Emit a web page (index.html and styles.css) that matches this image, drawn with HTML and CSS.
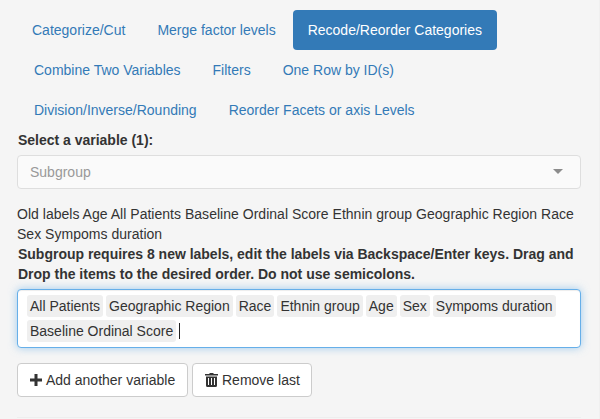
FILE: index.html
```html
<!DOCTYPE html>
<html lang="en">
<head>
<meta charset="utf-8">
<title>Recode/Reorder Categories</title>
<link rel="stylesheet" href="styles.css">
</head>
<body>
<main class="panel">
  <nav class="pills">
    <div class="pill-row first">
      <a class="pill">Categorize/Cut</a>
      <a class="pill">Merge factor levels</a>
      <a class="pill active">Recode/Reorder Categories</a>
    </div>
    <div class="pill-row">
      <a class="pill">Combine Two Variables</a>
      <a class="pill">Filters</a>
      <a class="pill">One Row by ID(s)</a>
    </div>
    <div class="pill-row">
      <a class="pill">Division/Inverse/Rounding</a>
      <a class="pill">Reorder Facets or axis Levels</a>
    </div>
  </nav>
  <div class="label">Select a variable (1):</div>
  <div class="select"><span>Subgroup</span><i class="caret"></i></div>
  <div class="old-labels">Old labels Age All Patients Baseline Ordinal Score Ethnin group Geographic Region Race<br>Sex Sympoms duration</div>
  <div class="label">Subgroup requires 8 new labels, edit the labels via Backspace/Enter keys. Drag and<br>Drop the items to the desired order. Do not use semicolons.</div>
  <div class="tags">
    <span class="tag">All Patients</span>
    <span class="tag">Geographic Region</span>
    <span class="tag">Race</span>
    <span class="tag">Ethnin group</span>
    <span class="tag">Age</span>
    <span class="tag">Sex</span>
    <span class="tag">Sympoms duration</span>
    <span class="tag">Baseline Ordinal Score</span>
    <i class="cursor"></i>
  </div>
  <div class="buttons">
    <button class="btn add"><svg width="12" height="12" viewBox="0 0 12 12"><path d="M4.500 0h3v4.500H12v3H7.500V12h-3V7.500H0v-3h4.500z"/></svg>Add another variable</button>
    <button class="btn remove"><svg width="13" height="14" viewBox="0 0 13 14"><path d="M0 1h4.500V0h4v1H13v1.500H0zM1 3.500h11V12.500q0 1.500-1.500 1.500h-8Q1 14 1 12.500z"/><path class="slots" d="M3.500 5v7M6.500 5v7M9.500 5v7"/></svg>Remove last</button>
  </div>
  <hr>
</main>
</body>
</html>
```
FILE: styles.css
```css
* { box-sizing: border-box; }
body {
  margin: 0;
  height: 419px;
  overflow: hidden;
  background: #f5f5f5;
  color: #333;
  font: 14px/20px "Liberation Sans", Arial, sans-serif;
}
.panel {
  height: 419px;
  padding: 10px 18px 0 17px;
  border-right: 1px solid #f0f0f0;
}
.pill-row { display: flex; gap: 2px; padding-left: 2px; }
.pill-row.first { padding-left: 0; }
.pill {
  padding: 10px 15px;
  border-radius: 4px;
  color: #337ab7;
  white-space: nowrap;
}
.pill.active { background: #337ab7; color: #fff; }
.label {
  padding-left: 1px;
  font-weight: 700;
  letter-spacing: -0.01px;
  white-space: nowrap;
}
.select {
  display: flex;
  align-items: center;
  justify-content: space-between;
  height: 34px;
  margin-top: 5px;
  padding: 0 17px 0 12px;
  border: 1px solid #dedede;
  border-radius: 4px;
  background: #fafafa;
  color: #999;
}
.caret {
  border: 5px solid transparent;
  border-top-color: #8c8c8c;
  border-bottom-width: 0;
  margin-bottom: 1px;
}
.old-labels { margin-top: 15px; letter-spacing: 0.022px; white-space: nowrap; }
.tags {
  display: flex;
  flex-wrap: wrap;
  align-content: flex-start;
  gap: 3px;
  height: 59px;
  margin-top: 5px;
  padding: 5px 9px;
  border: 1px solid #66afe9;
  border-radius: 4px;
  background: #fff;
  box-shadow: inset 0 1px 1px rgba(0,0,0,.075), 0 0 8px rgba(102,175,233,.6);
}
.tag {
  height: 22px;
  padding: 1px 3px;
  border-radius: 3px;
  background: #efefef;
  white-space: nowrap;
}
.cursor { width: 1px; height: 16px; margin-top: 3px; background: #222; }
.buttons { display: flex; gap: 4px; margin-top: 15px; }
.btn {
  display: flex;
  align-items: center;
  gap: 4px;
  height: 34px;
  padding: 0 12px;
  border: 1px solid #ccc;
  border-radius: 4px;
  background: #fff;
  color: #333;
  font: inherit;
  white-space: nowrap;
}
.add { width: 171px; }
.remove { width: 120px; }
.btn svg { flex: none; fill: #333; }
.btn .slots { stroke: #fff; stroke-width: 1; }
hr { margin: 20px 0 0; border: 0; border-top: 1px solid #eee; }
```
